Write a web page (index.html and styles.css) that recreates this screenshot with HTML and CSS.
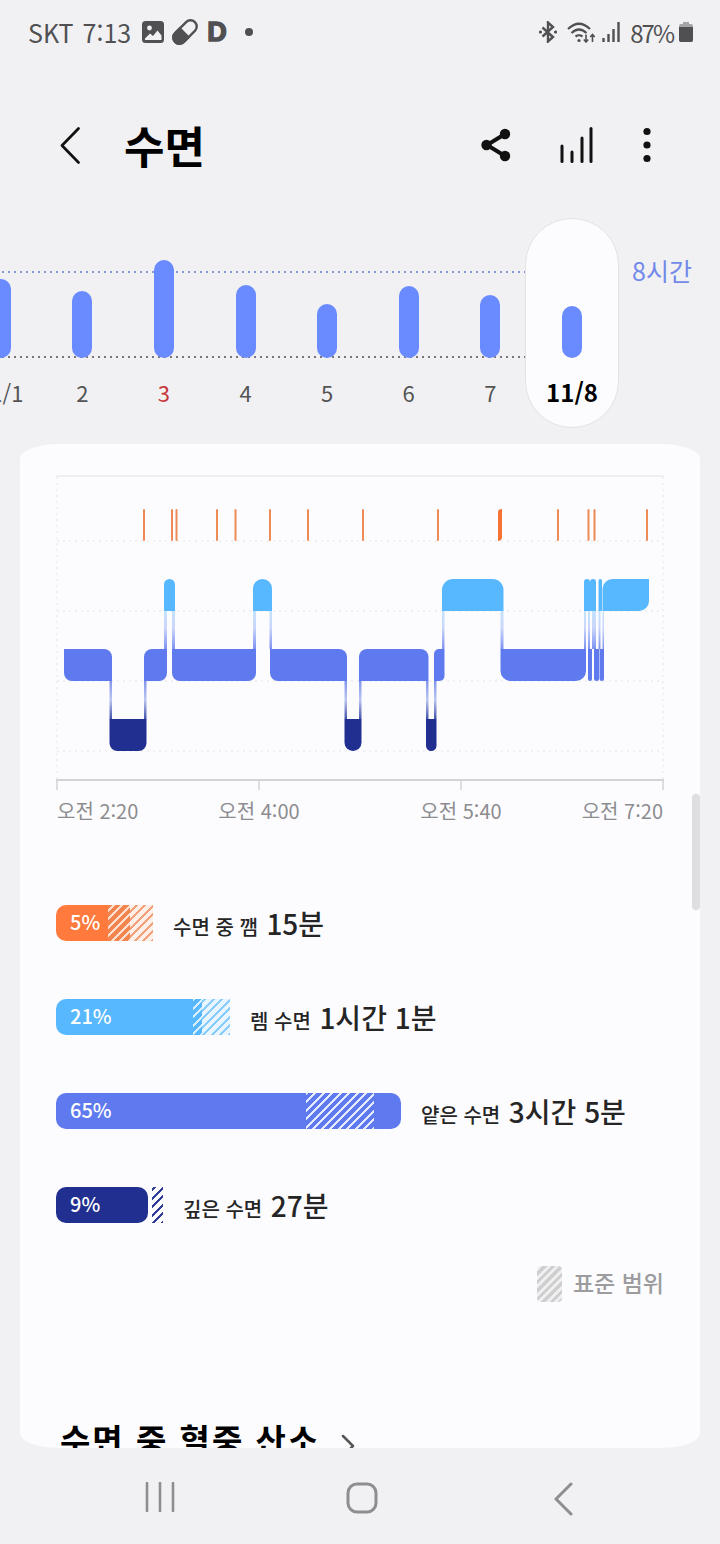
FILE: index.html
```html
<!DOCTYPE html>
<html lang="ko">
<head>
    <meta charset="UTF-8">
    <meta name="viewport" content="width=device-width, initial-scale=1.0">
    <title>수면</title>
    <link rel="stylesheet" href="styles.css">
</head>
<body>
    <div class="status-bar">
        <span class="carrier">SKT</span>
        <span class="clock">7:13</span>
        <svg class="st-image" width="22" height="22" viewBox="0 0 22 22">
            <rect x="0" y="0" width="22" height="22" rx="3.5" fill="#505052"/>
            <circle cx="7.5" cy="7" r="2.4" fill="#f1f1f3"/>
            <path d="M3 17.5 L8 12.5 L11 15 L15.5 9.5 L19.5 14.5 V19 H3 Z" fill="#f1f1f3"/>
        </svg>
        <svg class="st-pill" width="26" height="26" viewBox="0 0 26 26">
            <g transform="rotate(-45 13 13)">
                <rect x="-1" y="6.8" width="28" height="12.4" rx="6.2" fill="none" stroke="#505052" stroke-width="2.4"/>
                <path d="M13 5.6 H5.2 A7.4 7.4 0 0 0 5.2 20.4 H13 Z" fill="#505052"/>
            </g>
        </svg>
        <span class="st-logo">D</span>
        <span class="st-dot"></span>
        <div class="status-right">
            <svg width="18" height="22" viewBox="0 0 18 22">
                <path d="M3.5 6.5 L14 16 L9 20.5 V1.5 L14 6 L3.5 15.5" fill="none" stroke="#505052" stroke-width="2.4"/>
                <circle cx="1.5" cy="11" r="1.6" fill="#505052"/>
                <circle cx="16.5" cy="11" r="1.6" fill="#505052"/>
            </svg>
            <svg class="st-wifi" width="29" height="22" viewBox="0 0 29 22">
                <g fill="none" stroke="#505052" stroke-width="2.2">
                    <path d="M1 8 Q12 -2.5 23 8"/>
                    <path d="M4.5 12 Q12 5 19.5 12"/>
                    <path d="M8.5 15.5 Q12 13 15.5 15.5"/>
                    <path d="M19 13.5 V21 M16.8 18.5 L19 21 L21.2 18.5" stroke-width="1.6"/>
                    <path d="M25.5 21 V13.5 M23.3 16 L25.5 13.5 L27.7 16" stroke-width="1.6"/>
                </g>
                <circle cx="12" cy="19.5" r="1.6" fill="#505052"/>
            </svg>
            <svg class="st-signal" width="18" height="20" viewBox="0 0 18 20">
                <g stroke="#505052" stroke-width="2.4">
                    <path d="M1.5 20 V16"/>
                    <path d="M6.5 20 V12"/>
                    <path d="M11.5 20 V7"/>
                    <path d="M16.5 20 V0"/>
                </g>
            </svg>
            <span class="battery-text">87%</span>
            <svg class="st-battery" width="14" height="20" viewBox="0 0 14 20">
                <rect x="4" y="0" width="6" height="3" fill="#a5a5a7"/>
                <rect x="0" y="2" width="14" height="18" rx="2" fill="#a5a5a7"/>
                <path d="M0 5 H14 V18 Q14 20 12 20 H2 Q0 20 0 18 Z" fill="#505052"/>
            </svg>
        </div>
    </div>

    <div class="header">
        <svg class="back" width="20" height="37" viewBox="0 0 20 37">
            <path d="M18.5 1.5 L2 18.5 L18.5 35.5" fill="none" stroke="#111" stroke-width="2.7" stroke-linecap="round" stroke-linejoin="round"/>
        </svg>
        <h1 class="title">수면</h1>
        <svg class="act-share" width="30" height="34" viewBox="0 0 30 34">
            <path d="M24 6 L6 17 L24 28" fill="none" stroke="#111" stroke-width="4"/>
            <circle cx="24" cy="6" r="5.2" fill="#111"/>
            <circle cx="5.5" cy="17" r="5.2" fill="#111"/>
            <circle cx="24" cy="28" r="5.2" fill="#111"/>
        </svg>
        <svg class="act-chart" width="33" height="36" viewBox="0 0 33 36">
            <g stroke="#111" stroke-width="3" stroke-linecap="round">
                <path d="M2 34.5 V19"/>
                <path d="M12 34.5 V25"/>
                <path d="M22 34.5 V11"/>
                <path d="M31 34.5 V1.5"/>
            </g>
        </svg>
        <svg class="act-more" width="8" height="36" viewBox="0 0 8 36">
            <circle cx="4" cy="4.5" r="3.6" fill="#111"/>
            <circle cx="4" cy="18" r="3.6" fill="#111"/>
            <circle cx="4" cy="31.5" r="3.6" fill="#111"/>
        </svg>
    </div>

    <div class="week">
        <div class="days">
            <div class="days-plot">
                <div class="day-col"><span class="bar" style="height: 79px"></span></div>
                <div class="day-col"><span class="bar" style="height: 67px"></span></div>
                <div class="day-col"><span class="bar" style="height: 98px"></span></div>
                <div class="day-col"><span class="bar" style="height: 73px"></span></div>
                <div class="day-col"><span class="bar" style="height: 54px"></span></div>
                <div class="day-col"><span class="bar" style="height: 72px"></span></div>
                <div class="day-col"><span class="bar" style="height: 63px"></span></div>
            </div>
            <div class="days-labels">
                <span>11/1</span>
                <span>2</span>
                <span class="sunday">3</span>
                <span>4</span>
                <span>5</span>
                <span>6</span>
                <span>7</span>
            </div>
        </div>
        <div class="today">
            <span class="bar" style="height: 52px"></span>
            <span class="today-label">11/8</span>
        </div>
        <span class="goal">8시간</span>
    </div>

    <div class="card">
        <svg class="hypnogram" width="610" height="320" viewBox="56 470 610 320">
            <defs>
                <linearGradient id="fadeUp" x1="0" y1="0" x2="0" y2="1">
                    <stop offset="0" stop-color="#c4e4ff"/>
                    <stop offset="0.45" stop-color="#c9d5fa"/>
                    <stop offset="1" stop-color="#7d92f0"/>
                </linearGradient>
                <linearGradient id="fadeDown" x1="0" y1="0" x2="0" y2="1">
                    <stop offset="0" stop-color="#8195ec"/>
                    <stop offset="0.5" stop-color="#bcc6f2"/>
                    <stop offset="1" stop-color="#4453ab"/>
                </linearGradient>
            </defs>

            <!-- frame -->
            <path class="frame" d="M56 476 H664"/>
            <path class="grid" d="M57 477 V780 M663 477 V780 M57 541 H663 M57 611 H663 M57 681 H663 M57 751 H663"/>
            <path class="axis" d="M56 780 H664"/>
            <path class="tick" d="M57 780 V790 M259 780 V790 M461 780 V790 M663 780 V790"/>

            <!-- awake marks -->
            <g class="awake">
                <rect x="143" y="509" width="2" height="32" rx="1"/>
                <rect x="171" y="509" width="2" height="32" rx="1"/>
                <rect x="175.5" y="509" width="2" height="32" rx="1"/>
                <rect x="216" y="509" width="2" height="32" rx="1"/>
                <rect x="234.5" y="509" width="2" height="32" rx="1"/>
                <rect x="269" y="509" width="2" height="32" rx="1"/>
                <rect x="307" y="509" width="2" height="32" rx="1"/>
                <rect x="362" y="509" width="2" height="32" rx="1"/>
                <rect x="437" y="509" width="2" height="32" rx="1"/>
                <path class="awake-wide" d="M498 512 Q498 509 502 509 V538 Q501 541 498 541 Z"/>
                <rect x="557" y="509" width="2" height="32" rx="1"/>
                <rect x="587.5" y="509" width="2" height="32" rx="1"/>
                <rect x="593.5" y="509" width="2" height="32" rx="1"/>
                <rect x="646" y="509" width="2" height="32" rx="1"/>
            </g>

            <!-- transitions -->
            <g fill="url(#fadeUp)">
                <rect x="164" y="611" width="3" height="38"/>
                <rect x="172" y="611" width="3" height="38"/>
                <rect x="253" y="611" width="3" height="38"/>
                <rect x="269.5" y="611" width="2.5" height="38"/>
                <rect x="442" y="611" width="2.5" height="38"/>
                <rect x="500.5" y="611" width="3" height="38"/>
                <rect x="584" y="611" width="2" height="38"/>
                <rect x="588" y="611" width="2" height="38"/>
                <rect x="592" y="611" width="2" height="38"/>
                <rect x="594" y="611" width="2" height="38"/>
                <rect x="598.5" y="611" width="2" height="38"/>
                <rect x="602.5" y="611" width="1.5" height="38"/>
            </g>
            <g fill="url(#fadeDown)">
                <rect x="109.5" y="681" width="2.5" height="38"/>
                <rect x="144" y="681" width="2.5" height="38"/>
                <rect x="344.5" y="681" width="2.5" height="38"/>
                <rect x="359" y="681" width="2.5" height="38"/>
                <rect x="426" y="681" width="2.5" height="38"/>
                <rect x="434" y="681" width="2.5" height="38"/>
            </g>

            <!-- rem -->
            <g class="rem">
                <path d="M164 584.5 A5.5 5.5 0 0 1 175 584.5 V611 H164 Z"/>
                <path d="M253 588.5 A9.5 9.5 0 0 1 272 588.5 V611 H253 Z"/>
                <path d="M442 590 A11 11 0 0 1 453 579 H492.5 A11 11 0 0 1 503.5 590 V611 H442 Z"/>
                <path d="M584 582 A3 3 0 0 1 590 582 V611 H584 Z"/>
                <path d="M590 582 A3 3 0 0 1 596 582 V611 H590 Z"/>
                <path d="M598.5 580.8 A1.75 1.75 0 0 1 602 580.8 V611 H598.5 Z"/>
                <path d="M602.5 589 A10 10 0 0 1 612.5 579 H649 V601 A10 10 0 0 1 639 611 H602.5 Z"/>
            </g>

            <!-- light -->
            <g class="light">
                <path d="M64 649 H104 A8 8 0 0 1 112 657 V681 H72 A8 8 0 0 1 64 673 Z"/>
                <path d="M152 649 H167 V673 A8 8 0 0 1 159 681 H144 V657 A8 8 0 0 1 152 649 Z"/>
                <path d="M172 649 H256 V673 A8 8 0 0 1 248 681 H180 A8 8 0 0 1 172 673 Z"/>
                <path d="M270 649 H339 A8 8 0 0 1 347 657 V681 H278 A8 8 0 0 1 270 673 Z"/>
                <path d="M359 657 A8 8 0 0 1 367 649 H420.5 A8 8 0 0 1 428.5 657 V681 H359 Z"/>
                <path d="M439 649 H444.5 V676 A5 5 0 0 1 439.5 681 H434 V654 A5 5 0 0 1 439 649 Z"/>
                <path d="M500.5 649 H586 V671 A10 10 0 0 1 576 681 H510.5 A10 10 0 0 1 500.5 671 Z"/>
                <path d="M588 649 H592 V679 A2 2 0 0 1 588 679 Z"/>
                <path d="M594 649 H599 V678.5 A2.5 2.5 0 0 1 594 678.5 Z"/>
                <path d="M599.5 649 H604 V678.7 A2.25 2.25 0 0 1 599.5 678.7 Z"/>
            </g>

            <!-- deep -->
            <g class="deep">
                <path d="M109.5 719 H146.5 V743 A8 8 0 0 1 138.5 751 H117.5 A8 8 0 0 1 109.5 743 Z"/>
                <path d="M344.5 719 H361.5 V742.5 A8.5 8.5 0 0 1 344.5 742.5 Z"/>
                <path d="M426 719 H436.5 V745.7 A5.25 5.25 0 0 1 426 745.7 Z"/>
            </g>
        </svg>

        <div class="time-axis">
            <span>오전 2:20</span>
            <span>오전 4:00</span>
            <span>오전 5:40</span>
            <span>오전 7:20</span>
        </div>

        <div class="stages">
            <div class="stage">
                <div class="stage-bar">
                    <div class="seg awake-bg first" style="width: 52px">5%</div>
                    <div class="seg awake-on" style="width: 22px"></div>
                    <div class="seg awake-off" style="width: 23px"></div>
                </div>
                <p class="stage-text">수면 중 깸 <b>15분</b></p>
            </div>
            <div class="stage">
                <div class="stage-bar">
                    <div class="seg rem-bg first" style="width: 137px">21%</div>
                    <div class="seg rem-on" style="width: 9px"></div>
                    <div class="seg rem-off" style="width: 28px"></div>
                </div>
                <p class="stage-text">렘 수면 <b>1시간 1분</b></p>
            </div>
            <div class="stage">
                <div class="stage-bar">
                    <div class="seg light-bg first" style="width: 250px">65%</div>
                    <div class="seg light-on" style="width: 68px"></div>
                    <div class="seg light-bg last" style="width: 27px"></div>
                </div>
                <p class="stage-text">얕은 수면 <b>3시간 5분</b></p>
            </div>
            <div class="stage">
                <div class="stage-bar">
                    <div class="seg deep-bg first last" style="width: 92px">9%</div>
                    <div class="seg deep-off" style="width: 11px"></div>
                </div>
                <p class="stage-text">깊은 수면 <b>27분</b></p>
            </div>
        </div>

        <div class="range-key">
            <span class="range-swatch"></span>
            <span class="range-label">표준 범위</span>
        </div>

        <div class="section-title">
            <h2>수면 중 혈중 산소</h2>
            <svg class="section-more" width="14" height="24" viewBox="0 0 14 24">
                <path d="M2 2 L12 12 L2 22" fill="none" stroke="#555" stroke-width="2.5" stroke-linecap="round" stroke-linejoin="round"/>
            </svg>
        </div>

        <div class="scrollbar"></div>
    </div>

    <div class="nav">
        <svg class="nav-recent" width="30" height="30" viewBox="0 0 30 30">
            <path d="M2 1 V29 M15 1 V29 M28 1 V29" stroke="#8e8e90" stroke-width="2.6" stroke-linecap="round"/>
        </svg>
        <svg class="nav-home" width="32" height="32" viewBox="0 0 32 32">
            <rect x="2" y="2" width="28" height="28" rx="9" fill="none" stroke="#8e8e90" stroke-width="3"/>
        </svg>
        <svg class="nav-back" width="20" height="34" viewBox="0 0 20 34">
            <path d="M18 2 L3 17 L18 32" fill="none" stroke="#8e8e90" stroke-width="3" stroke-linecap="round" stroke-linejoin="round"/>
        </svg>
    </div>
</body>
</html>
```

FILE: styles.css
```css
body {
    font-family: "Noto Sans CJK KR", "Noto Sans", sans-serif;
    background-color: #f1f1f3;
    color: #252525;
    margin: 0;
    width: 720px;
    height: 1544px;
    overflow: hidden;
    display: flex;
    flex-direction: column;
}

/* status bar */
.status-bar {
    height: 64px;
    display: flex;
    align-items: center;
    padding-left: 28px;
    padding-right: 27px;
    color: #505052;
    font-size: 25px;
    flex-shrink: 0;
}

.carrier {
    margin-right: 9px;
}

.clock {
    margin-right: 11px;
}

.st-image {
    margin-right: 8px;
}

.st-pill {
    margin-right: 9px;
}

.st-logo {
    font-family: "Liberation Sans", sans-serif;
    font-weight: 700;
    font-size: 27px;
    -webkit-text-stroke: 1.5px #505052;
}

.st-dot {
    width: 8px;
    height: 8px;
    border-radius: 50%;
    background: #505052;
    margin-left: 18px;
}

.status-right {
    margin-left: auto;
    display: flex;
    align-items: center;
}

.st-wifi {
    margin-left: 10px;
}

.st-signal {
    margin-left: 6px;
}

.battery-text {
    margin-left: 10px;
    margin-right: 6px;
    font-size: 24px;
    letter-spacing: -2px;
}

/* header */
.header {
    height: 64px;
    margin-top: 49px;
    display: flex;
    align-items: center;
    padding-left: 60px;
    flex-shrink: 0;
}

.title {
    margin: 0 0 0 44px;
    font-size: 44px;
    font-weight: 700;
    color: #000;
    line-height: 64px;
}

.act-share {
    margin-left: auto;
}

.act-chart {
    margin-left: 49px;
}

.act-more {
    margin-left: 50px;
    margin-right: 69px;
}

/* week chart */
.week {
    height: 210px;
    margin-top: 41px;
    display: flex;
    align-items: flex-start;
    flex-shrink: 0;
}

.days {
    width: 571px;
    margin-left: -40px;
    flex-shrink: 0;
}

.days-plot {
    margin-top: 53px;
    height: 87px;
    display: flex;
    background-image:
        linear-gradient(to right, #8296dc 2px, transparent 2px),
        linear-gradient(to right, #77777b 2px, transparent 2px);
    background-size: 6px 2px;
    background-repeat: repeat-x;
    background-position: 0 0, 0 bottom;
}

.day-col {
    flex: 1;
    display: flex;
    justify-content: center;
    align-items: flex-end;
}

.bar {
    display: block;
    width: 20px;
    border-radius: 10px;
    background: #6a8bff;
    flex-shrink: 0;
}

.days-labels {
    display: flex;
    margin-top: 20px;
    font-size: 22px;
    line-height: 28px;
    color: #555;
}

.days-labels span {
    flex: 1;
    text-align: center;
}

.days-labels .sunday {
    color: #c8363a;
}

.today {
    width: 94px;
    height: 210px;
    box-sizing: border-box;
    margin-left: -6px;
    border: 1px solid #e3e3e6;
    border-radius: 47px;
    background: #fcfcfe;
    display: flex;
    flex-direction: column;
    align-items: center;
    padding-top: 87px;
    flex-shrink: 0;
}

.today-label {
    margin-top: 20px;
    font-size: 24px;
    line-height: 28px;
    font-weight: 700;
    color: #000;
}

.goal {
    margin-left: 13px;
    margin-top: 34px;
    font-size: 25px;
    line-height: 36px;
    color: #7389ea;
    white-space: nowrap;
}

/* card */
.card {
    position: relative;
    margin: 16px 20px 0;
    height: 1004px;
    box-sizing: border-box;
    padding-top: 26px;
    border-radius: 38px / 15px;
    background: #fcfcfe;
    overflow: hidden;
    flex-shrink: 0;
}

.hypnogram {
    display: block;
    margin-left: 36px;
}

.frame {
    fill: none;
    stroke: #eeeef0;
    stroke-width: 2;
}

.grid {
    fill: none;
    stroke: #e4e4e8;
    stroke-width: 1;
    stroke-dasharray: 2 4;
}

.axis {
    fill: none;
    stroke: #d4d4d6;
    stroke-width: 2;
}

.tick {
    fill: none;
    stroke: #d4d4d6;
    stroke-width: 1.5;
}

.awake {
    fill: #ee8a56;
}

.awake-wide {
    fill: #f57435;
}

.rem {
    fill: #57b8ff;
}

.light {
    fill: #5f7aee;
}

.deep {
    fill: #212f91;
}

.time-axis {
    margin: 8px 36px 0 37px;
    display: grid;
    grid-template-columns: 101px 202px 202px 101px;
    font-size: 20px;
    line-height: 26px;
    color: #8c8c90;
    white-space: nowrap;
}

.time-axis span {
    text-align: center;
}

.time-axis span:first-child {
    text-align: left;
}

.time-axis span:last-child {
    text-align: right;
}

/* stage rows */
.stages {
    margin: 81px 0 0 36px;
    display: flex;
    flex-direction: column;
    gap: 58px;
}

.stage {
    display: flex;
    align-items: center;
    height: 36px;
}

.stage-bar {
    display: flex;
    height: 36px;
    margin-right: 20px;
}

.seg {
    height: 36px;
    box-sizing: border-box;
    color: #fff;
    font-size: 20px;
    font-weight: 500;
    line-height: 34px;
    white-space: nowrap;
}

.seg.first {
    padding-left: 14px;
    border-top-left-radius: 10px;
    border-bottom-left-radius: 10px;
}

.seg.last {
    border-top-right-radius: 10px;
    border-bottom-right-radius: 10px;
}

.awake-bg {
    background: #ff7a3c;
}

.rem-bg {
    background: #57b8ff;
}

.light-bg {
    background: #5f7aee;
}

.deep-bg {
    background: #212f91;
    margin-right: 4px;
}

.awake-on {
    background: repeating-linear-gradient(-45deg, #ffe0d0 0 2px, #f2854f 2px 6px);
}

.awake-off {
    background: repeating-linear-gradient(-45deg, #f4a27c 0 2px, #fdf0e9 2px 6px);
}

.rem-on {
    background: repeating-linear-gradient(-45deg, #d5eeff 0 2px, #57b8ff 2px 6px);
}

.rem-off {
    background: repeating-linear-gradient(-45deg, #8accfb 0 2px, #eaf6ff 2px 6px);
}

.light-on {
    background: repeating-linear-gradient(-45deg, #e4e9fd 0 2px, #5f7aee 2px 6px);
}

.deep-off {
    background: repeating-linear-gradient(-45deg, #2f3c98 0 2px, #fcfcfe 2px 6px);
}

.stage-text {
    margin: 0;
    font-size: 20px;
    font-weight: 500;
    white-space: nowrap;
}

.stage-text b {
    font-size: 28px;
    font-weight: 500;
    margin-left: 3px;
}

.range-key {
    margin: 42px 36px 0 0;
    display: flex;
    justify-content: flex-end;
    align-items: center;
    gap: 11px;
    font-size: 23px;
    font-weight: 500;
    color: #9c9c9e;
}

.range-swatch {
    width: 25px;
    height: 36px;
    border-radius: 4px;
    background: repeating-linear-gradient(-45deg, #cfcfd1 0 3px, #efeff0 3px 6px);
}

.range-label {
    margin-bottom: 4px;
}

.section-title {
    margin: 110px 0 0 40px;
    display: flex;
    align-items: center;
    gap: 21px;
}

.section-title h2 {
    margin: 0;
    font-size: 33px;
    font-weight: 700;
    letter-spacing: 2px;
    line-height: 52px;
    color: #000;
    white-space: nowrap;
}

.section-more {
    margin-top: 14px;
}

.scrollbar {
    position: absolute;
    right: 0;
    top: 350px;
    width: 8px;
    height: 116px;
    border-radius: 4px;
    background: #dedee0;
}

/* nav */
.nav {
    flex: 1;
    position: relative;
    display: flex;
    align-items: flex-start;
    padding-top: 34px;
}

.nav-recent {
    margin-left: 145px;
}

.nav-home {
    margin-left: 171px;
}

.nav-back {
    margin-left: 175px;
}
```
